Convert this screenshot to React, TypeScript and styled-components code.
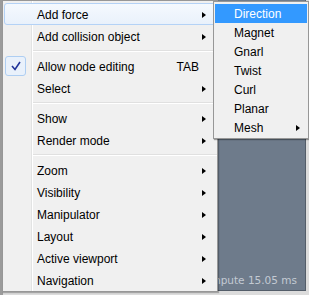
import styled, { createGlobalStyle } from "styled-components";

const GlobalStyle = createGlobalStyle`
  html, body {
    margin: 0;
    padding: 0;
    background: #d8d8d8;
  }
`;

const Screen = styled.div`
  position: relative;
  width: 309px;
  height: 295px;
  display: flex;
  overflow: hidden;
  background: #dcdcdc;
  font-family: "Liberation Sans", Arial, sans-serif;
  font-size: 12px;
`;

const SideStrip = styled.div`
  width: 3px;
  background: #9b9b9b;
`;

const Viewport = styled.div`
  flex: 1;
  margin: 0 3px 4px 0;
  background: #6e7b8b;
  border-right: 1px solid #535d69;
  border-bottom: 1px solid #535d69;
  display: flex;
  align-items: flex-end;
  justify-content: flex-end;
  padding: 0 8px 4px 0;
`;

const Stats = styled.span`
  font-family: "DejaVu Sans", sans-serif;
  font-size: 10.5px;
  color: #c3cad3;
`;

const MainMenu = styled.div`
  position: absolute;
  left: 2px;
  top: 0;
  width: 213px;
  padding: 2px 0 0 1px;
  background: #f0f0f0;
  border: 1px solid #979797;
  box-shadow: 1px 1px 1px rgba(0, 0, 0, 0.25);
  display: flex;
  flex-direction: column;
`;

const Gutter = styled.div`
  position: absolute;
  left: 28px;
  top: 0;
  bottom: 0;
  width: 1px;
  background: #e2e3e3;
  border-right: 1px solid #ffffff;
`;

const Item = styled.div<{ $active?: boolean }>`
  position: relative;
  height: 22px;
  display: flex;
  align-items: center;
  padding: 2px 9px 0 32px;
  box-sizing: border-box;
  color: #000;
  border-radius: 3px;
  border: 1px solid ${(p) => (p.$active ? "#b4d2f6" : "transparent")};
  background: ${(p) =>
    p.$active ? "linear-gradient(#f5f9fe, #e9f1fb)" : "transparent"};
  margin-right: 1px;
`;

const Label = styled.span`
  flex: 1;
`;

const Shortcut = styled.span`
  margin-right: 7px;
`;

const Arrow = styled.span<{ $light?: boolean }>`
  width: 0;
  height: 0;
  border-left: 4px solid ${(p) => (p.$light ? "#fff" : "#000")};
  border-top: 3.5px solid transparent;
  border-bottom: 3.5px solid transparent;
`;

const Separator = styled.div`
  height: 8px;
  display: flex;
  align-items: center;
  padding-left: 28px;

  &::after {
    content: "";
    flex: 1;
    height: 1px;
    background: #e0e0e0;
    border-bottom: 1px solid #ffffff;
  }
`;

const CheckBox = styled.span`
  position: absolute;
  left: 0;
  top: 0;
  width: 21px;
  height: 20px;
  box-sizing: border-box;
  border: 1px solid #aecef2;
  border-radius: 3px;
  background: #e9f1fb;
  display: flex;
  align-items: center;
  justify-content: center;
`;

const SubMenu = styled.div`
  position: absolute;
  left: 213px;
  top: 1px;
  width: 92px;
  padding: 2px 1px 1px 1px;
  background: #f0f0f0;
  border: 1px solid #979797;
  box-shadow: 1px 1px 1px rgba(0, 0, 0, 0.35);
  display: flex;
  flex-direction: column;
`;

const SubItem = styled.div<{ $active?: boolean }>`
  height: 19px;
  display: flex;
  align-items: center;
  padding: 1px 7px 0 19px;
  box-sizing: border-box;
  background: ${(p) => (p.$active ? "#3399ff" : "transparent")};
  color: ${(p) => (p.$active ? "#ffffff" : "#000000")};
`;

type Entry =
  | { sep: true }
  | {
      sep?: false;
      label: string;
      sub?: boolean;
      shortcut?: string;
      checked?: boolean;
      active?: boolean;
    };

const mainItems: Entry[] = [
  { label: "Add force", sub: true, active: true },
  { label: "Add collision object", sub: true },
  { sep: true },
  { label: "Allow node editing", shortcut: "TAB", checked: true },
  { label: "Select", sub: true },
  { sep: true },
  { label: "Show", sub: true },
  { label: "Render mode", sub: true },
  { sep: true },
  { label: "Zoom", sub: true },
  { label: "Visibility", sub: true },
  { label: "Manipulator", sub: true },
  { label: "Layout", sub: true },
  { label: "Active viewport", sub: true },
  { label: "Navigation", sub: true },
];

const forceItems = [
  { label: "Direction", active: true },
  { label: "Magnet" },
  { label: "Gnarl" },
  { label: "Twist" },
  { label: "Curl" },
  { label: "Planar" },
  { label: "Mesh", sub: true },
];

function Check() {
  return (
    <svg width="10" height="10" viewBox="0 0 10 10">
      <path d="M1 5 L4 8.5 L9 1" fill="none" stroke="#21349a" strokeWidth="1.6" />
    </svg>
  );
}

export default function App() {
  return (
    <>
      <GlobalStyle />
      <Screen>
        <SideStrip />
        <Viewport>
          <Stats>Compute 15.05 ms</Stats>
        </Viewport>

        <MainMenu>
          <Gutter />
          {mainItems.map((it, i) =>
            it.sep ? (
              <Separator key={i} />
            ) : (
              <Item key={i} $active={it.active}>
                {it.checked && (
                  <CheckBox>
                    <Check />
                  </CheckBox>
                )}
                <Label>{it.label}</Label>
                {it.shortcut && <Shortcut>{it.shortcut}</Shortcut>}
                {it.sub && <Arrow />}
              </Item>
            )
          )}
        </MainMenu>

        <SubMenu>
          {forceItems.map((it) => (
            <SubItem key={it.label} $active={it.active}>
              <Label>{it.label}</Label>
              {it.sub && <Arrow $light={it.active} />}
            </SubItem>
          ))}
        </SubMenu>
      </Screen>
    </>
  );
}
